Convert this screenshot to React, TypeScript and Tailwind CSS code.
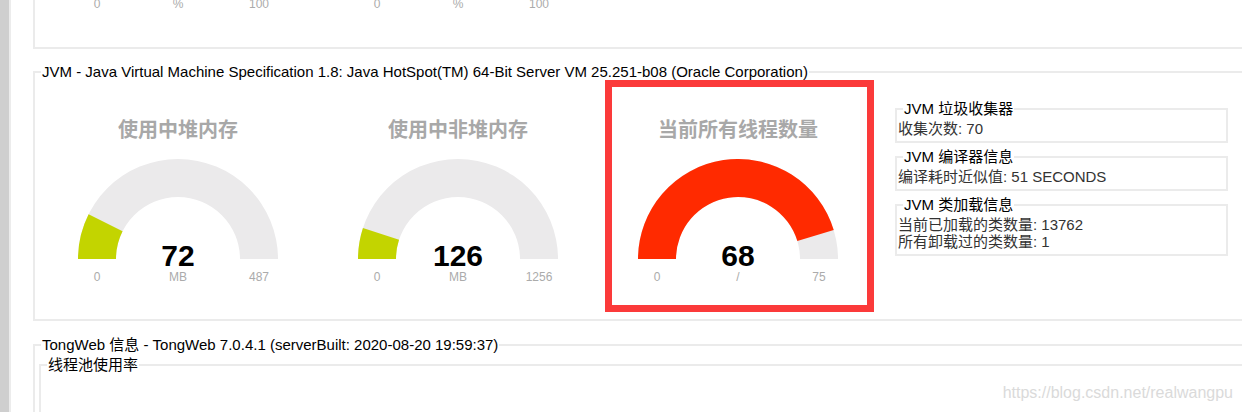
import React from 'react';

interface Gauge {
  title: string;
  value: number;
  unit: string;
  max: number;
  color: string;
  highlight?: boolean;
}

const gauges: Gauge[] = [
  { title: '使用中堆内存', value: 72, unit: 'MB', max: 487, color: '#c3d400' },
  { title: '使用中非堆内存', value: 126, unit: 'MB', max: 1256, color: '#c3d400' },
  { title: '当前所有线程数量', value: 68, unit: '/', max: 75, color: '#ff2a00', highlight: true },
];

// annular sector from the left end of the half circle, clockwise over the top
const sector = (frac: number) => {
  const cx = 100, cy = 100, R = 100, r = 62;
  const a0 = Math.PI;
  const a1 = Math.PI + frac * Math.PI;
  const p = (rad: number, a: number) => `${(cx + rad * Math.cos(a)).toFixed(2)} ${(cy + rad * Math.sin(a)).toFixed(2)}`;
  return `M ${p(R, a0)} A ${R} ${R} 0 0 1 ${p(R, a1)} L ${p(r, a1)} A ${r} ${r} 0 0 0 ${p(r, a0)} Z`;
};

const Labels: React.FC<{ min: string; unit: string; max: string; className?: string }> = ({ min, unit, max, className }) => (
  <div className={`w-[200px] flex text-[12px] leading-[14px] text-[#ababab] ${className ?? ''}`}>
    <span className="w-[38px] text-center">{min}</span>
    <span className="flex-1 text-center">{unit}</span>
    <span className="w-[38px] text-center">{max}</span>
  </div>
);

const GaugeCell: React.FC<{ g: Gauge }> = ({ g }) => (
  <div className="relative w-[280px] h-[239px] flex flex-col items-center pt-[38px]">
    <div className="text-[20px] leading-[24px] font-bold text-[#a8a8a8] whitespace-nowrap">{g.title}</div>
    <div className="relative mt-[17px] w-[200px] h-[100px]">
      <svg width="200" height="100" viewBox="0 0 200 100" className="block">
        <path d={sector(1)} fill="#ebeaeb" />
        <path d={sector(Math.min(g.value / g.max, 1))} fill={g.color} />
      </svg>
      <div className="absolute inset-x-0 top-[82px] text-center text-[30px] leading-[30px] font-bold text-black">{g.value}</div>
    </div>
    <Labels min="0" unit={g.unit} max={String(g.max)} className="mt-[11px]" />
    {g.highlight && (
      <div className="absolute left-[7px] top-0 w-[269px] h-[232px] border-[7px] border-[#fb3a3a]" />
    )}
  </div>
);

const InfoBox: React.FC<{ title: string; lines: string[] }> = ({ title, lines }) => (
  <fieldset className="border-2 border-[#ebebeb] pb-[4px]">
    <legend className="ml-[6px] px-[1px] text-[15px] leading-[17px] text-black">{title}</legend>
    <div className="pt-[3px] pl-[1px] text-[15px] leading-[17px] text-[#333]">
      {lines.map((l) => (
        <div key={l}>{l}</div>
      ))}
    </div>
  </fieldset>
);

export default function App() {
  return (
    <div className="relative w-[1242px] h-[412px] overflow-hidden bg-white flex font-['Liberation_Sans','Noto_Sans_CJK_SC',sans-serif]">
      <div className="w-[9px] shrink-0 bg-[#cfcfcf]" />
      <div className="w-[2px] shrink-0 bg-[#ececec]" />

      <div className="ml-[22px] w-[1240px] shrink-0 flex flex-col">
        {/* panel above, scrolled mostly out of view */}
        <div className="h-[49px] shrink-0 border-x-2 border-b-2 border-[#ebebeb] flex pl-[3px]">
          <div className="w-[280px] flex justify-center">
            <Labels min="0" unit="%" max="100" className="mt-[-3px]" />
          </div>
          <div className="w-[280px] flex justify-center">
            <Labels min="0" unit="%" max="100" className="mt-[-3px]" />
          </div>
        </div>

        <fieldset className="shrink-0 mt-[14px] border-2 border-[#ebebeb]">
          <legend className="ml-[6px] px-[1px] text-[15px] leading-[17px] text-black whitespace-nowrap">
            JVM - Java Virtual Machine Specification 1.8: Java HotSpot(TM) 64-Bit Server VM 25.251-b08 (Oracle Corporation)
          </legend>
          <div className="flex pl-[3px]">
            {gauges.map((g) => (
              <GaugeCell key={g.title} g={g} />
            ))}
            <div className="ml-[17px] mt-[20px] w-[333px] flex flex-col gap-[5px]">
              <InfoBox title="JVM 垃圾收集器" lines={['收集次数: 70']} />
              <InfoBox title="JVM 编译器信息" lines={['编译耗时近似值: 51 SECONDS']} />
              <InfoBox title="JVM 类加载信息" lines={['当前已加载的类数量: 13762', '所有卸载过的类数量: 1']} />
            </div>
          </div>
        </fieldset>

        <fieldset className="shrink-0 mt-[15px] border-2 border-[#ebebeb]">
          <legend className="ml-[6px] px-[1px] text-[15px] leading-[17px] text-black whitespace-nowrap">
            TongWeb 信息 - TongWeb 7.0.4.1 (serverBuilt: 2020-08-20 19:59:37)
          </legend>
          <fieldset className="mt-[3px] ml-[4px] h-[80px] border-2 border-[#ebebeb]">
            <legend className="ml-[6px] px-[1px] text-[15px] leading-[17px] text-black">线程池使用率</legend>
          </fieldset>
        </fieldset>
      </div>

      <div className="absolute right-[9px] top-[383px] text-[16px] leading-[20px] text-[#dadada]">
        https://blog.csdn.net/realwangpu
      </div>
    </div>
  );
}
